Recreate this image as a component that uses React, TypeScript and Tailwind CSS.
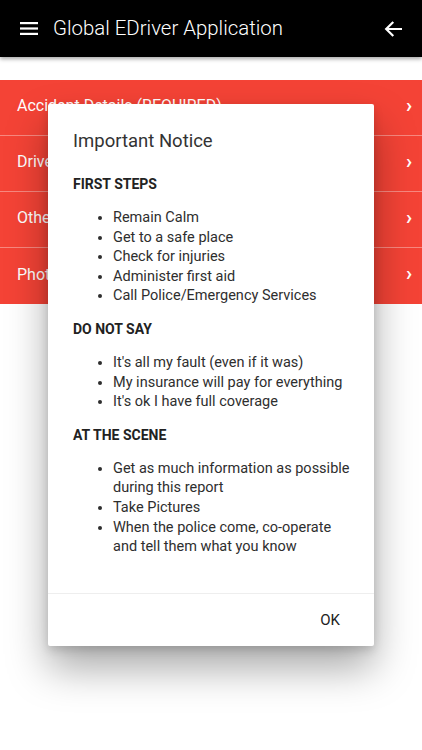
import React from "react";

const rows = ["Accident Details (REQUIRED)", "Driver Details", "Other Party Details", "Photos"];

function Section({ title, items }: { title: string; items: React.ReactNode[] }) {
  return (
    <div>
      <div className="text-[14px] leading-[20px] font-bold text-[#222]">{title}</div>
      <ul className="list-disc pl-[40px] mt-[14px] mb-[13px] text-[14.5px] leading-[19.6px] text-[#2e2e2e]">
        {items.map((it, i) => (
          <li key={i} className="whitespace-nowrap">{it}</li>
        ))}
      </ul>
    </div>
  );
}

export default function App() {
  return (
    <div className="relative w-[422px] h-[750px] bg-white overflow-hidden" style={{ fontFamily: "Roboto, 'Noto Sans', sans-serif" }}>
      <header className="h-[57px] bg-black flex items-center shadow-[0_2px_4px_rgba(0,0,0,0.35)] relative z-10">
        <div className="w-[53px] flex justify-center pl-[5px]">
          <svg width="18" height="13" viewBox="0 0 18 13">
            <rect x="0" y="0" width="18" height="2.2" fill="#fff" />
            <rect x="0" y="5.4" width="18" height="2.2" fill="#fff" />
            <rect x="0" y="10.8" width="18" height="2.2" fill="#fff" />
          </svg>
        </div>
        <div className="text-white text-[20.4px] font-light flex-1">Global EDriver Application</div>
        <div className="pr-[20px]">
          <svg width="18" height="16" viewBox="0 0 18 16">
            <path d="M17 8H2.5M8.5 1.8L2.2 8l6.3 6.2" stroke="#fff" strokeWidth="2.2" fill="none" strokeLinecap="square" />
          </svg>
        </div>
      </header>
      <div className="pt-[23px]">
        {rows.map((r, i) => (
          <div key={r} className={`h-[56px] bg-[#f44336] flex items-center justify-between pl-[17px] pr-[10px] ${i < rows.length - 1 ? "border-b border-[#f8887f]" : ""}`}>
            <span className="text-white text-[16px] -mt-[3px]">{r}</span>
            <span className="text-white text-[20px] font-bold leading-none -mt-[6px]">›</span>
          </div>
        ))}
      </div>

      <div className="absolute left-[48px] top-[104px] w-[326px] h-[542px] bg-white rounded-[2px] shadow-[0_22px_40px_rgba(0,0,0,0.34),0_4px_10px_rgba(0,0,0,0.15)] flex flex-col">
        <div className="px-[25px] pt-[23px] flex-1">
          <div className="text-[18.5px] leading-[28px] text-[#333] mb-[19px]">Important Notice</div>
          <Section
            title="FIRST STEPS"
            items={["Remain Calm", "Get to a safe place", "Check for injuries", "Administer first aid", "Call Police/Emergency Services"]}
          />
          <Section
            title="DO NOT SAY"
            items={["It's all my fault (even if it was)", "My insurance will pay for everything", "It's ok I have full coverage"]}
          />
          <Section
            title="AT THE SCENE"
            items={[
              <>Get as much information as possible<br />during this report</>,
              "Take Pictures",
              <>When the police come, co-operate<br />and tell them what you know</>,
            ]}
          />
        </div>
        <div className="h-[53px] border-t border-[#eeeeee] flex items-center justify-end pr-[34px]">
          <span className="text-[15px] text-[#222]">OK</span>
        </div>
      </div>
    </div>
  );
}
